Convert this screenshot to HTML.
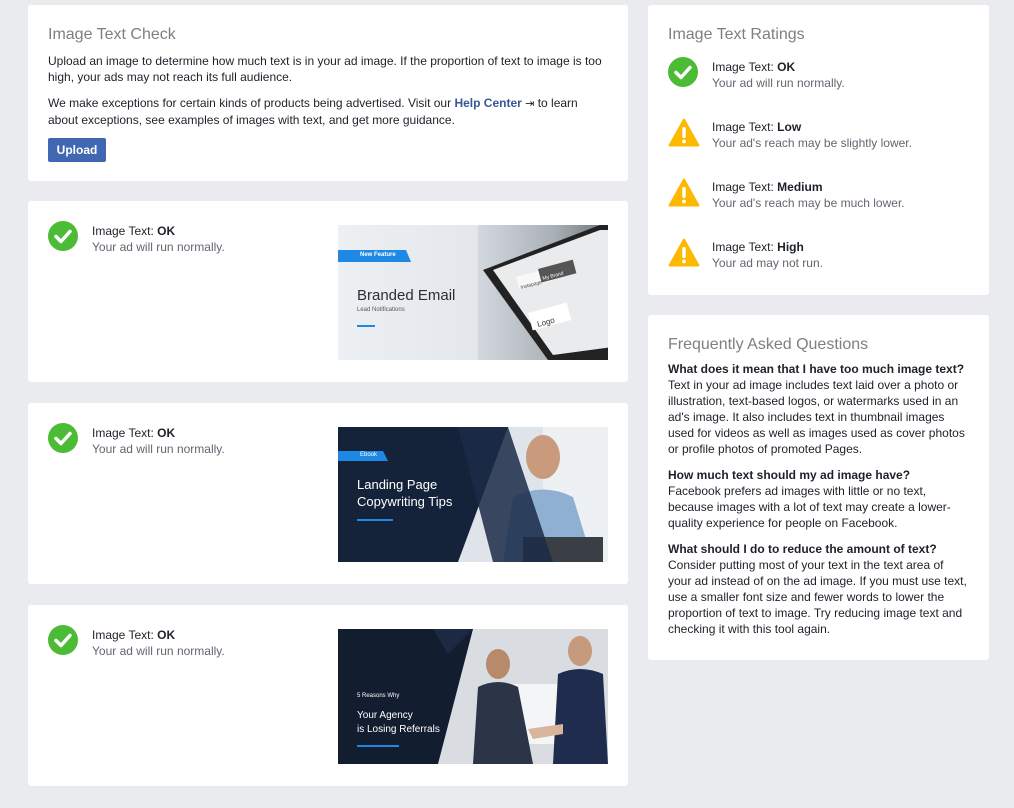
<!DOCTYPE html>
<html><head><meta charset="utf-8"><style>
*{box-sizing:border-box;margin:0;padding:0}
body{width:1014px;height:808px;background:#e9ebee;font-family:"Liberation Sans",Arial,sans-serif;font-size:12px;color:#1d2129;position:relative;overflow:hidden}
.card{position:absolute;background:#fff;border-radius:3px}
h2{font-weight:normal;font-size:16px;color:#7f7f7f;line-height:20px}
p{line-height:16px}
.sub{color:#616770}
.row{position:absolute;left:20px}
.row .ic{position:absolute;left:0;top:0}
.row .tx{position:absolute;left:44px;top:0;white-space:nowrap;line-height:16px}
.img{position:absolute;left:310px;width:270px;height:135px;overflow:hidden}
.img svg{position:absolute;left:0;top:0}
.t{position:absolute;white-space:nowrap}
</style></head><body>
<svg width="0" height="0" style="position:absolute"><defs>
<g id="ok"><circle cx="15" cy="15" r="15" fill="#42b72a" opacity=".95"/><path d="M8 15.5l5 5 9-10" stroke="#fff" stroke-width="3.5" fill="none" stroke-linecap="round" stroke-linejoin="round"/></g>
<g id="warn"><path d="M16 2.5 L30.5 28.5 H1.5 Z" fill="#fcb900" stroke="#fcb900" stroke-width="2" stroke-linejoin="round"/><rect x="14.3" y="10" width="3.4" height="11" rx="1.5" fill="#fff"/><circle cx="16" cy="24.5" r="1.9" fill="#fff"/></g>
</defs></svg>

<div class="card" style="left:28px;top:5px;width:600px;height:176px;padding:20px">
<h2>Image Text Check</h2>
<p style="margin-top:8px">Upload an image to determine how much text is in your ad image. If the proportion of text to image is too high, your ads may not reach its full audience.</p>
<p style="margin-top:10px">We make exceptions for certain kinds of products being advertised. Visit our <b style="color:#365899">Help Center</b> <span style="font-size:11px">⇥</span> to learn about exceptions, see examples of images with text, and get more guidance.</p>
<div style="margin-top:10px;width:58px;height:24px;background:#4267b2;border-radius:2px;color:#fff;font-weight:bold;text-align:center;line-height:24px">Upload</div>
</div>

<div class="card" style="left:28px;top:201px;width:600px;height:181px">
<div class="row" style="top:20px"><svg class="ic" width="32" height="32"><use href="#ok"/></svg><div class="tx" style="top:2px">Image Text: <b>OK</b><br><span class="sub">Your ad will run normally.</span></div></div>
<div class="img" style="top:24px">
<svg width="270" height="135"><defs><linearGradient id="g1" x1="0" x2="1"><stop offset="0" stop-color="#e4e8ec"/><stop offset=".5" stop-color="#d5dbe1"/><stop offset=".8" stop-color="#a9b0b6"/><stop offset="1" stop-color="#6f757a"/></linearGradient></defs>
<rect width="270" height="135" fill="url(#g1)"/>
<rect x="0" y="0" width="140" height="135" fill="#fff" opacity=".35"/>
<path d="M145 45 L262 0 L290 0 L290 135 L210 135 Z" fill="#222"/>
<path d="M155 45 L262 5 L290 5 L290 120 L215 130 Z" fill="#e9ebec"/>
<rect x="178" y="52" width="34" height="13" fill="#f8f8f8" transform="rotate(-15 178 52)"/>
<rect x="200" y="44" width="36" height="14" fill="#555" transform="rotate(-15 200 44)"/>
<rect x="190" y="88" width="40" height="18" fill="#fff" transform="rotate(-15 190 88)"/>
<text x="200" y="102" font-size="8" fill="#333" transform="rotate(-15 200 102)" font-family="Liberation Sans">Logo</text>
<text x="183" y="64" font-size="5" fill="#444" transform="rotate(-15 183 64)" font-family="Liberation Sans">Instapage</text>
<text x="205" y="55" font-size="5" fill="#fff" transform="rotate(-15 205 55)" font-family="Liberation Sans">My Brand</text>
<path d="M0 25 H68 L73 37 H0 Z" fill="#1e88e5"/>
<rect x="19" y="100" width="18" height="2" fill="#1e88e5"/>
</svg>
<div class="t" style="left:22px;top:27px;font-size:6px;color:#fff;font-weight:bold">New Feature</div>
<div class="t" style="left:19px;top:62px;font-size:15px;color:#2a2f36">Branded Email</div>
<div class="t" style="left:19px;top:82px;font-size:6px;color:#555">Lead Notifications</div>
</div>
</div>

<div class="card" style="left:28px;top:403px;width:600px;height:181px">
<div class="row" style="top:20px"><svg class="ic" width="32" height="32"><use href="#ok"/></svg><div class="tx" style="top:2px">Image Text: <b>OK</b><br><span class="sub">Your ad will run normally.</span></div></div>
<div class="img" style="top:24px">
<svg width="270" height="135"><rect width="270" height="135" fill="#dfe4ea"/>
<rect x="205" y="0" width="65" height="135" fill="#eef1f4"/>
<ellipse cx="205" cy="30" rx="17" ry="22" fill="#c99a7c"/>
<path d="M165 135 L175 70 Q205 55 235 70 L255 135 Z" fill="#8fb0d3"/>
<rect x="185" y="110" width="80" height="25" fill="#3a3f46"/>
<path d="M0 0 H170 L120 135 H0 Z" fill="#15233a"/>
<path d="M120 0 H170 L215 135 H155 Z" fill="#1b2c46" opacity=".85"/>
<path d="M0 24 H45 L50 34 H0 Z" fill="#1e88e5"/>
<rect x="19" y="92" width="36" height="2" fill="#1e88e5"/>
</svg>
<div class="t" style="left:22px;top:25px;font-size:6px;color:#fff">Ebook</div>
<div class="t" style="left:19px;top:49px;font-size:13px;line-height:17px;color:#fff">Landing Page<br>Copywriting Tips</div>
</div>
</div>

<div class="card" style="left:28px;top:605px;width:600px;height:181px">
<div class="row" style="top:20px"><svg class="ic" width="32" height="32"><use href="#ok"/></svg><div class="tx" style="top:2px">Image Text: <b>OK</b><br><span class="sub">Your ad will run normally.</span></div></div>
<div class="img" style="top:24px">
<svg width="270" height="135"><rect width="270" height="135" fill="#d9dde1"/>
<rect x="175" y="55" width="50" height="60" fill="#f4f5f6"/>
<ellipse cx="160" cy="35" rx="12" ry="15" fill="#b88a6c"/>
<path d="M135 135 L140 58 Q160 48 180 58 L195 135 Z" fill="#2c3548"/>
<ellipse cx="242" cy="22" rx="12" ry="15" fill="#c69a7c"/>
<path d="M215 135 L220 45 Q242 35 265 45 L270 135 Z" fill="#1f2c4d"/>
<path d="M190 100 L225 95 L225 105 L195 110 Z" fill="#d8b49a"/>
<path d="M0 0 H135 L100 135 H0 Z" fill="#121d30"/>
<path d="M95 0 H135 L110 25 Z" fill="#1b2a42"/>
<rect x="19" y="116" width="42" height="2" fill="#1e88e5"/>
</svg>
<div class="t" style="left:19px;top:64px;font-size:6px;color:#fff">5 Reasons Why</div>
<div class="t" style="left:19px;top:80px;font-size:10px;line-height:14px;color:#fff">Your Agency<br>is Losing Referrals</div>
</div>
</div>

<div class="card" style="left:648px;top:5px;width:341px;height:290px;padding:20px">
<h2>Image Text Ratings</h2>
<div class="row" style="top:52px"><svg class="ic" width="32" height="32"><use href="#ok"/></svg><div class="tx" style="top:2px">Image Text: <b>OK</b><br><span class="sub">Your ad will run normally.</span></div></div>
<div class="row" style="top:112px"><svg class="ic" width="32" height="32"><use href="#warn"/></svg><div class="tx" style="top:2px">Image Text: <b>Low</b><br><span class="sub">Your ad's reach may be slightly lower.</span></div></div>
<div class="row" style="top:172px"><svg class="ic" width="32" height="32"><use href="#warn"/></svg><div class="tx" style="top:2px">Image Text: <b>Medium</b><br><span class="sub">Your ad's reach may be much lower.</span></div></div>
<div class="row" style="top:232px"><svg class="ic" width="32" height="32"><use href="#warn"/></svg><div class="tx" style="top:2px">Image Text: <b>High</b><br><span class="sub">Your ad may not run.</span></div></div>
</div>

<div class="card" style="left:648px;top:315px;width:341px;height:345px;padding:20px">
<h2>Frequently Asked Questions</h2>
<p style="margin-top:6px;width:302px"><b>What does it mean that I have too much image text?</b><br>Text in your ad image includes text laid over a photo or illustration, text-based logos, or watermarks used in an ad's image. It also includes text in thumbnail images used for videos as well as images used as cover photos or profile photos of promoted Pages.</p>
<p style="margin-top:10px;width:302px"><b>How much text should my ad image have?</b><br>Facebook prefers ad images with little or no text, because images with a lot of text may create a lower-quality experience for people on Facebook.</p>
<p style="margin-top:10px;width:302px"><b>What should I do to reduce the amount of text?</b><br>Consider putting most of your text in the text area of your ad instead of on the ad image. If you must use text, use a smaller font size and fewer words to lower the proportion of text to image. Try reducing image text and checking it with this tool again.</p>
</div>
</body></html>
